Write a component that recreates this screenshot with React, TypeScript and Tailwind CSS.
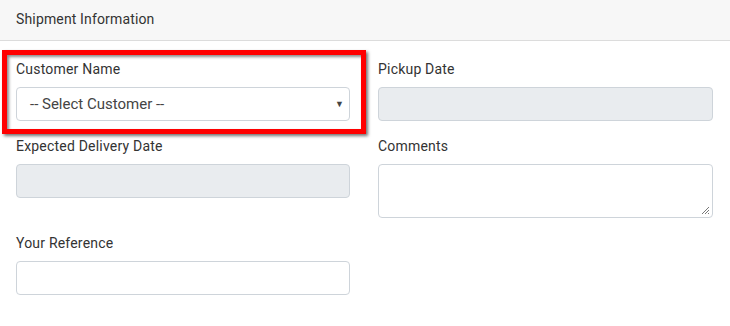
export default function App() {
  return (
    <div className="w-[730px] h-[326px] bg-white font-['Roboto',sans-serif] text-[14px] text-[#333] overflow-hidden">
      <div className="h-[41px] bg-[#f7f7f7] border-b border-[#dcdcdc] px-4 pb-[2px] flex items-center">
        <span className="text-[14px] tracking-[0.15px] text-[#333]">Shipment Information</span>
      </div>

      <div className="relative px-4 pt-[18px] grid grid-cols-[334px_335px] gap-x-[28px]">
        <div className="mb-[15px]">
          <label className="block mb-[7px] leading-[21px] tracking-[0.2px]">Customer Name</label>
          <div className="relative h-[34px] border border-[#ced4da] rounded-[4px] bg-white flex items-center pl-[13px] text-[15px] text-[#444]">
            -- Select Customer --
            <span className="absolute right-[5px] top-[10px] text-[9px] text-[#444]">▼</span>
          </div>
        </div>
        <div className="mb-[15px]">
          <label className="block mb-[7px] leading-[21px] tracking-[0.2px]">Pickup Date</label>
          <div className="h-[34px] border border-[#ced4da] rounded-[4px] bg-[#e9ecef]" />
        </div>

        <div className="mb-[15px]">
          <label className="block mb-[7px] leading-[21px] tracking-[0.2px]">Expected Delivery Date</label>
          <div className="h-[34px] border border-[#ced4da] rounded-[4px] bg-[#e9ecef]" />
        </div>
        <div className="mb-[15px]">
          <label className="block mb-[7px] leading-[21px] tracking-[0.2px]">Comments</label>
          <div className="relative h-[54px] border border-[#ced4da] rounded-[4px] bg-white">
            <svg className="absolute right-[2px] bottom-[2px]" width="9" height="9" viewBox="0 0 9 9">
              <path d="M8 1 L1 8 M8 4 L4 8 M8 7 L7 8" stroke="#555" strokeWidth="0.8" />
            </svg>
          </div>
        </div>

        <div className="mb-[15px]">
          <label className="block mb-[7px] leading-[21px] tracking-[0.2px]">Your Reference</label>
          <div className="h-[34px] border border-[#ced4da] rounded-[4px] bg-white" />
        </div>

        <div className="absolute left-[2px] top-[9px] w-[364px] h-[84px] border-[5px] border-[#f00] shadow-[2px_2px_3px_rgba(0,0,0,0.55),inset_2px_2px_3px_rgba(0,0,0,0.45)] pointer-events-none" />
      </div>
    </div>
  );
}
